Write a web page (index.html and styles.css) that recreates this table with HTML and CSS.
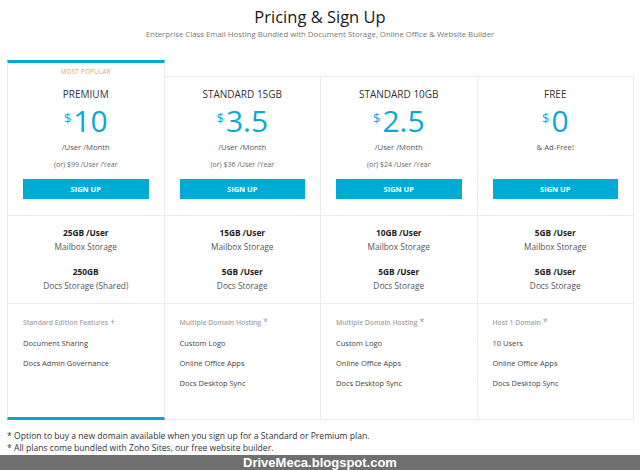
FILE: index.html
```html
<!DOCTYPE html>
<html lang="en">
<head>
<meta charset="utf-8">
<title>Pricing &amp; Sign Up</title>
<link rel="stylesheet" href="styles.css">
</head>
<body>
<header class="header">
  <h1 class="title">Pricing &amp; Sign Up</h1>
  <p class="subtitle">Enterprise Class Email Hosting Bundled with Document Storage, Online Office &amp; Website Builder</p>
</header>

<main class="plans">
  <section class="plan plan-featured">
    <div class="plan-top">
      <div class="badge">MOST POPULAR</div>
      <div class="plan-name">PREMIUM</div>
      <div class="price"><span class="cur">$</span>10</div>
      <div class="per">/User /Month</div>
      <div class="yearly">(or) $99 /User /Year</div>
      <button class="btn">SIGN UP</button>
    </div>
    <div class="plan-storage">
      <div class="amt">25GB /User</div>
      <div class="lbl">Mailbox Storage</div>
      <div class="amt amt-2">250GB</div>
      <div class="lbl">Docs Storage (Shared)</div>
    </div>
    <ul class="plan-features">
      <li class="fhead">Standard Edition Features <span class="mark">+</span></li>
      <li>Document Sharing</li>
      <li>Docs Admin Governance</li>
    </ul>
  </section>

  <section class="plan">
    <div class="plan-top">
      <div class="plan-name">STANDARD 15GB</div>
      <div class="price"><span class="cur">$</span>3.5</div>
      <div class="per">/User /Month</div>
      <div class="yearly">(or) $36 /User /Year</div>
      <button class="btn">SIGN UP</button>
    </div>
    <div class="plan-storage">
      <div class="amt">15GB /User</div>
      <div class="lbl">Mailbox Storage</div>
      <div class="amt amt-2">5GB /User</div>
      <div class="lbl">Docs Storage</div>
    </div>
    <ul class="plan-features">
      <li class="fhead">Multiple Domain Hosting <span class="mark">*</span></li>
      <li>Custom Logo</li>
      <li>Online Office Apps</li>
      <li>Docs Desktop Sync</li>
    </ul>
  </section>

  <section class="plan">
    <div class="plan-top">
      <div class="plan-name">STANDARD 10GB</div>
      <div class="price"><span class="cur">$</span>2.5</div>
      <div class="per">/User /Month</div>
      <div class="yearly">(or) $24 /User /Year</div>
      <button class="btn">SIGN UP</button>
    </div>
    <div class="plan-storage">
      <div class="amt">10GB /User</div>
      <div class="lbl">Mailbox Storage</div>
      <div class="amt amt-2">5GB /User</div>
      <div class="lbl">Docs Storage</div>
    </div>
    <ul class="plan-features">
      <li class="fhead">Multiple Domain Hosting <span class="mark">*</span></li>
      <li>Custom Logo</li>
      <li>Online Office Apps</li>
      <li>Docs Desktop Sync</li>
    </ul>
  </section>

  <section class="plan">
    <div class="plan-top">
      <div class="plan-name">FREE</div>
      <div class="price"><span class="cur">$</span>0</div>
      <div class="per">&amp; Ad-Free!</div>
      <div class="yearly">&nbsp;</div>
      <button class="btn">SIGN UP</button>
    </div>
    <div class="plan-storage">
      <div class="amt">5GB /User</div>
      <div class="lbl">Mailbox Storage</div>
      <div class="amt amt-2">5GB /User</div>
      <div class="lbl">Docs Storage</div>
    </div>
    <ul class="plan-features">
      <li class="fhead">Host 1 Domain <span class="mark">*</span></li>
      <li>10 Users</li>
      <li>Online Office Apps</li>
      <li>Docs Desktop Sync</li>
    </ul>
  </section>
</main>

<div class="notes">
  <p>* Option to buy a new domain available when you sign up for a Standard or Premium plan.</p>
  <p>* All plans come bundled with Zoho Sites, our free website builder.</p>
</div>

<footer class="watermark">DriveMeca.blogspot.com</footer>
</body>
</html>
```

FILE: styles.css
```css
* { box-sizing: border-box; }

body {
  margin: 0;
  width: 640px;
  height: 470px;
  overflow: hidden;
  background: #fff;
  font-family: "Open Sans", "DejaVu Sans", sans-serif;
  color: #333;
}

.header {
  height: 60px;
  text-align: center;
}

.title {
  margin: 0;
  padding-top: 6px;
  font-size: 16.5px;
  line-height: 22px;
  font-weight: 400;
  color: #1a1a1a;
}

.subtitle {
  margin: 0;
  font-size: 7.8px;
  line-height: 12px;
  color: #777;
}

.plans {
  display: flex;
  align-items: flex-start;
  width: 627px;
  margin-left: 7px;
}

.plan {
  flex: 1 1 0;
  margin-top: 16px;
  border-top: 1px solid #ececec;
  border-right: 1px solid #ececec;
  border-bottom: 1px solid #ececec;
  text-align: center;
}

.plan-featured {
  margin-top: 0;
  border-top: 3px solid #00a9d4;
  border-left: 1px solid #ececec;
  border-bottom: 3px solid #00a9d4;
}

.plan-top {
  height: 139px;
  padding-top: 10px;
  border-bottom: 1px solid #ececec;
}

.plan-featured .plan-top {
  height: 153px;
  padding-top: 3px;
}

.badge {
  font-size: 6.2px;
  line-height: 12px;
  letter-spacing: 0.3px;
  color: #eba15a;
  margin-bottom: 9px;
}

.plan-name {
  font-size: 10px;
  line-height: 14px;
  color: #333;
}

.price {
  height: 40px;
  font-size: 30px;
  line-height: 40px;
  color: #0aa8d4;
}

.cur {
  font-size: 13px;
  line-height: 34px;
  vertical-align: top;
  margin-right: 2px;
}

.per {
  font-size: 7.7px;
  line-height: 12px;
  color: #555;
}

.yearly {
  margin-top: 6px;
  font-size: 7px;
  line-height: 12px;
  color: #666;
}

.btn {
  display: block;
  width: calc(100% - 30px);
  height: 20px;
  margin: 8px auto 0;
  padding: 0;
  border: 0;
  background: #00acd6;
  color: #fff;
  font-family: "Open Sans", "DejaVu Sans", sans-serif;
  font-size: 7.5px;
  font-weight: 700;
}

.plan-storage {
  height: 88px;
  padding-top: 10px;
  border-bottom: 1px solid #ececec;
  font-size: 8.3px;
  line-height: 13.5px;
}

.amt {
  font-weight: 700;
  color: #222;
}

.amt-2 { margin-top: 12px; }

.lbl { color: #555; }

.plan-features {
  list-style: none;
  margin: 0;
  height: 115px;
  padding: 12px 15px 0;
  text-align: left;
  font-size: 7.5px;
  line-height: 20px;
  color: #444;
}

.plan-featured .plan-features { height: 113px; }

.plan-features .fhead {
  font-size: 6.8px;
  line-height: 12px;
  font-weight: 600;
  color: #a5a5a5;
  margin-bottom: 4px;
}

.mark {
  font-size: 9px;
  color: #999;
  font-weight: 400;
}

.notes {
  height: 35px;
  padding: 10px 0 0 7px;
  font-size: 8.6px;
  line-height: 12px;
  color: #333;
}

.notes p { margin: 0; }

.watermark {
  height: 16px;
  background: #6f6f6f;
  color: #fff;
  text-align: center;
  font-family: "Liberation Sans", Arial, sans-serif;
  font-weight: 700;
  font-size: 13px;
  line-height: 16px;
}
```
